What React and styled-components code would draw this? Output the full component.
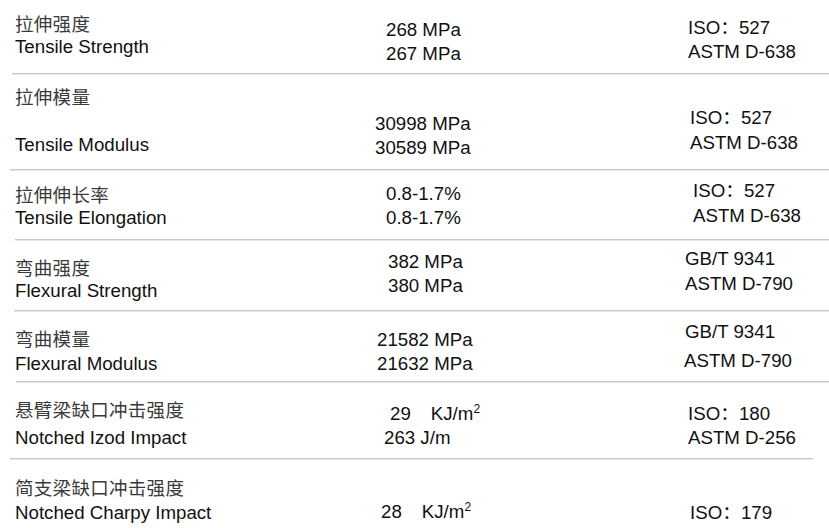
import React from 'react';
import styled, { createGlobalStyle } from 'styled-components';

const GlobalStyle = createGlobalStyle`
  html, body {
    margin: 0;
    padding: 0;
    background: #ffffff;
  }
  body {
    font-family: "Liberation Sans", Arial, "Noto Sans CJK SC", sans-serif;
    color: #111111;
  }
`;

const rows = [
  {
    height: 73,
    label: { top: 11, gap: 0, zh: '拉伸强度', en: 'Tensile Strength' },
    value: { top: 18, gap: 0, lines: [{ x: 26, text: '268 MPa' }, { x: 26, text: '267 MPa' }] },
    method: { top: 16, gap: 0, lines: [{ x: 8, text: 'ISO：527' }, { x: 8, text: 'ASTM D-638' }] },
    divider: { left: 12, right: 0 },
  },
  {
    height: 94,
    label: { top: 9, gap: 25, zh: '拉伸模量', en: 'Tensile Modulus' },
    value: { top: 37, gap: 0, lines: [{ x: 15, text: '30998 MPa' }, { x: 15, text: '30589 MPa' }] },
    method: { top: 31, gap: 1, lines: [{ x: 10, text: 'ISO：527' }, { x: 10, text: 'ASTM D-638' }] },
    divider: { left: 10, right: 0 },
  },
  {
    height: 68,
    label: { top: 11, gap: 0, zh: '拉伸伸长率', en: 'Tensile Elongation' },
    value: { top: 11, gap: 0, lines: [{ x: 26, text: '0.8-1.7%' }, { x: 26, text: '0.8-1.7%' }] },
    method: { top: 8, gap: 1, lines: [{ x: 13, text: 'ISO：527' }, { x: 13, text: 'ASTM D-638' }] },
    divider: { left: 15, right: 0 },
  },
  {
    height: 69,
    label: { top: 14, gap: 0, zh: '弯曲强度', en: 'Flexural Strength' },
    value: { top: 9, gap: 0, lines: [{ x: 28, text: '382 MPa' }, { x: 28, text: '380 MPa' }] },
    method: { top: 6, gap: 1, lines: [{ x: 5, text: 'GB/T 9341' }, { x: 5, text: 'ASTM D-790' }] },
    divider: { left: 14, right: 0 },
  },
  {
    height: 69,
    label: { top: 14, gap: 2, zh: '弯曲模量', en: 'Flexural Modulus' },
    value: { top: 16, gap: 0, lines: [{ x: 17, text: '21582 MPa' }, { x: 17, text: '21632 MPa' }] },
    method: { top: 8, gap: 5, lines: [{ x: 5, text: 'GB/T 9341' }, { x: 4, text: 'ASTM D-790' }] },
    divider: { left: 16, right: 0 },
  },
  {
    height: 75,
    label: { top: 14, gap: 5, zh: '悬臂梁缺口冲击强度', en: 'Notched Izod Impact' },
    value: { top: 19, gap: 0, lines: [{ x: 30, text: '29', unit: true }, { x: 24, text: '263 J/m' }] },
    method: { top: 19, gap: 0, lines: [{ x: 8, text: 'ISO：180' }, { x: 8, text: 'ASTM D-256' }] },
    divider: { left: 10, right: 16 },
  },
  {
    height: 68,
    label: { top: 15, gap: 2, zh: '简支梁缺口冲击强度', en: 'Notched Charpy Impact' },
    value: { top: 40, gap: 0, lines: [{ x: 21, text: '28', unit: true }] },
    method: { top: 41, gap: 0, lines: [{ x: 10, text: 'ISO：179' }] },
  },
];

const Sheet = styled.div`
  width: 829px;
  height: 528px;
  overflow: hidden;
  font-size: 18.7px;
  line-height: 24px;
`;

const Row = styled.div`
  display: grid;
  grid-template-columns: 345px 320px 1fr;
  height: ${(p) => p.$height}px;
  padding-left: 15px;
  box-sizing: border-box;
`;

const Cell = styled.div`
  display: flex;
  flex-direction: column;
  gap: ${(p) => p.$gap}px;
  padding-top: ${(p) => p.$top}px;
  white-space: nowrap;
`;

const ZhLabel = styled.div`
  font-family: "Noto Sans CJK SC", sans-serif;
  font-size: 18.5px;
  color: #3a3a3a;
  height: 24px;
  letter-spacing: 0.3px;
`;

const EnLabel = styled.div`
  height: 24px;
`;

const Line = styled.div`
  height: 24px;
  padding-left: ${(p) => p.$x}px;
`;

const Unit = styled.span`
  margin-left: 20px;
`;

const Sup = styled.span`
  font-size: 12px;
  line-height: 0;
  vertical-align: 7px;
`;

const Divider = styled.div`
  height: 1px;
  margin-left: ${(p) => p.$left}px;
  margin-right: ${(p) => p.$right}px;
  border-bottom: 1px solid #e6e6e6;
  background: #c8c8c8;
`;

const App = () => (
  <>
    <GlobalStyle />
    <Sheet>
      {rows.map((row) => (
        <React.Fragment key={row.label.en}>
          <Row $height={row.height}>
            <Cell $top={row.label.top} $gap={row.label.gap}>
              <ZhLabel>{row.label.zh}</ZhLabel>
              <EnLabel>{row.label.en}</EnLabel>
            </Cell>
            <Cell $top={row.value.top} $gap={row.value.gap}>
              {row.value.lines.map((line, i) => (
                <Line key={i} $x={line.x}>
                  {line.text}
                  {line.unit && (
                    <Unit>
                      KJ/m<Sup>2</Sup>
                    </Unit>
                  )}
                </Line>
              ))}
            </Cell>
            <Cell $top={row.method.top} $gap={row.method.gap}>
              {row.method.lines.map((line, i) => (
                <Line key={i} $x={line.x}>
                  {line.text}
                </Line>
              ))}
            </Cell>
          </Row>
          {row.divider && <Divider $left={row.divider.left} $right={row.divider.right} />}
        </React.Fragment>
      ))}
    </Sheet>
  </>
);

export default App;
